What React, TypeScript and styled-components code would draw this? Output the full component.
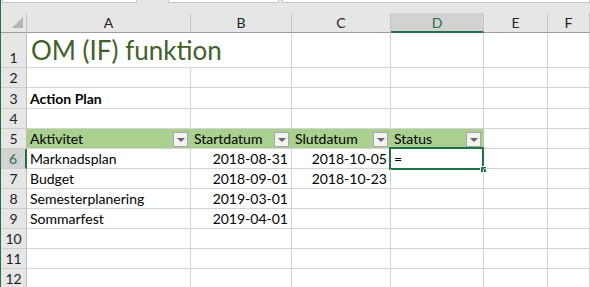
import React from 'react';
import styled, { createGlobalStyle } from 'styled-components';

const GlobalStyle = createGlobalStyle`
  html, body {
    margin: 0;
    padding: 0;
    background: #ffffff;
    overflow: hidden;
  }
`;

const green = '#217346';
const gridLine = '#d4d4d4';
const headerBg = '#e6e6e6';
const activeHeaderBg = '#d2d2d2';
const tableFill = '#a9d08e';

const Sheet = styled.div`
  width: 590px;
  height: 287px;
  border-left: 1px solid ${green};
  box-sizing: border-box;
  overflow: hidden;
  font-family: Lato, 'Open Sans', sans-serif;
  font-size: 14px;
  color: #000;
`;

const TopStrip = styled.div`
  height: 13px;
  background: ${headerBg};
  display: flex;
  align-items: flex-start;
`;

const StripBox = styled.div<{ $left: number; $width: number | string }>`
  margin-left: ${p => p.$left}px;
  width: ${p => (typeof p.$width === 'number' ? `${p.$width}px` : p.$width)};
  flex: ${p => (typeof p.$width === 'number' ? 'none' : '1')};
  height: 2px;
  background: #ffffff;
  border: 1px solid #c6c6c6;
  border-top: none;
`;

const Grid = styled.div`
  display: grid;
  grid-template-columns: 26px 164px 101px 99px 93px 64px 1fr;
  grid-template-rows: 20px 35px 20px 21px 20px repeat(8, 20px);
`;

const Corner = styled.div`
  position: relative;
  background: ${headerBg};
  border-right: 1px solid #c6c6c6;
  border-bottom: 1px solid #9c9c9c;
`;

const CornerTriangle = styled.div`
  position: absolute;
  right: 3px;
  bottom: 4px;
  width: 0;
  height: 0;
  border-left: 11px solid transparent;
  border-bottom: 11px solid #b4b4b4;
`;

const ColHeader = styled.div<{ $active?: boolean }>`
  background: ${p => (p.$active ? activeHeaderBg : headerBg)};
  border-right: 1px solid #c6c6c6;
  border-bottom: ${p => (p.$active ? `2px solid ${green}` : '1px solid #9c9c9c')};
  color: ${p => (p.$active ? green : '#222')};
  display: flex;
  align-items: center;
  justify-content: center;
  padding-top: ${p => (p.$active ? 1 : 0)}px;
  font-size: 14px;
`;

const RowHeader = styled.div<{ $active?: boolean }>`
  background: ${p => (p.$active ? activeHeaderBg : headerBg)};
  border-right: ${p => (p.$active ? `2px solid ${green}` : '1px solid #bdbdbd')};
  border-bottom: 1px solid #cdcdcd;
  color: ${p => (p.$active ? green : '#222')};
  display: flex;
  align-items: flex-end;
  justify-content: center;
  padding-bottom: 1px;
  box-sizing: border-box;
  font-size: 14px;
  line-height: 17px;
`;

const Cell = styled.div<{
  $align?: 'left' | 'right';
  $fill?: string;
  $noRight?: boolean;
  $bold?: boolean;
  $title?: boolean;
}>`
  position: relative;
  background: ${p => p.$fill || 'transparent'};
  border-right: 1px solid ${p => (p.$noRight ? 'transparent' : p.$fill || gridLine)};
  border-bottom: 1px solid ${gridLine};
  display: flex;
  align-items: flex-end;
  justify-content: ${p => (p.$align === 'right' ? 'flex-end' : 'flex-start')};
  padding: 0 3px 1px 3px;
  white-space: nowrap;
  overflow: visible;
  min-width: 0;
  font-size: ${p => (p.$title ? '26px' : '14px')};
  font-weight: ${p => (p.$bold ? 700 : 400)};
  color: ${p => (p.$title ? '#41602a' : '#000')};
  line-height: ${p => (p.$title ? '30px' : '17px')};
  padding-bottom: ${p => (p.$title ? '2px' : '1px')};
  padding-left: ${p => (p.$title ? '4px' : '3px')};
  z-index: ${p => (p.$title ? 1 : 0)};
`;

const FilterButton = styled.div`
  position: absolute;
  right: 2px;
  top: 3px;
  width: 13px;
  height: 13px;
  background: #f3f3f3;
  border: 1px solid #a6a6a6;
  display: flex;
  align-items: center;
  justify-content: center;

  &::after {
    content: '';
    width: 0;
    height: 0;
    border-left: 4px solid transparent;
    border-right: 4px solid transparent;
    border-top: 4px solid #666;
  }
`;

const Selection = styled.div`
  position: absolute;
  left: -2px;
  top: -2px;
  right: -1px;
  bottom: -2px;
  border: 2px solid ${green};
  pointer-events: none;
  z-index: 2;
`;

const FillHandle = styled.div`
  position: absolute;
  right: -4px;
  bottom: -4px;
  width: 5px;
  height: 5px;
  background: ${green};
  border: 1px solid #fff;
  border-right: none;
  border-bottom: none;
`;

const columns = ['A', 'B', 'C', 'D', 'E', 'F'];

type CellDef = {
  text?: string;
  align?: 'left' | 'right';
  bold?: boolean;
  title?: boolean;
  fill?: string;
  filter?: boolean;
  noRight?: boolean;
  selected?: boolean;
};

const head = (text: string): CellDef => ({ text, fill: tableFill, filter: true });

const rows: CellDef[][] = [
  [{ text: 'OM (IF) funktion', title: true, noRight: true }],
  [],
  [{ text: 'Action Plan', bold: true }],
  [],
  [head('Aktivitet'), head('Startdatum'), head('Slutdatum'), head('Status')],
  [
    { text: 'Marknadsplan' },
    { text: '2018-08-31', align: 'right' },
    { text: '2018-10-05', align: 'right' },
    { text: '=', selected: true },
  ],
  [
    { text: 'Budget' },
    { text: '2018-09-01', align: 'right' },
    { text: '2018-10-23', align: 'right' },
  ],
  [{ text: 'Semesterplanering' }, { text: '2019-03-01', align: 'right' }],
  [{ text: 'Sommarfest' }, { text: '2019-04-01', align: 'right' }],
  [],
  [],
  [],
];

const App: React.FC = () => {
  return (
    <>
      <GlobalStyle />
      <Sheet>
        <TopStrip>
          <StripBox $left={1} $width={133} />
          <StripBox $left={31} $width={109} />
          <StripBox $left={3} $width="auto" />
        </TopStrip>
        <Grid>
          <Corner>
            <CornerTriangle />
          </Corner>
          {columns.map(col => (
            <ColHeader key={col} $active={col === 'D'}>
              {col}
            </ColHeader>
          ))}
          {rows.map((row, r) => (
            <React.Fragment key={r}>
              <RowHeader $active={r === 5}>{r + 1}</RowHeader>
              {columns.map((col, c) => {
                const def = row[c] || {};
                return (
                  <Cell
                    key={col}
                    $align={def.align}
                    $fill={def.fill}
                    $noRight={def.noRight}
                    $bold={def.bold}
                    $title={def.title}
                  >
                    {def.text}
                    {def.filter && <FilterButton />}
                    {def.selected && (
                      <Selection>
                        <FillHandle />
                      </Selection>
                    )}
                  </Cell>
                );
              })}
            </React.Fragment>
          ))}
        </Grid>
      </Sheet>
    </>
  );
};

export default App;
